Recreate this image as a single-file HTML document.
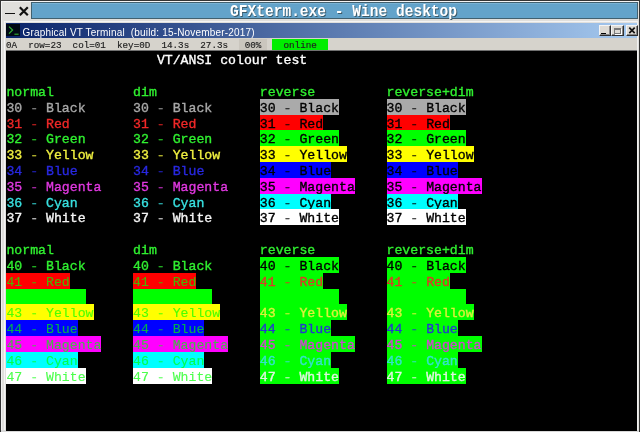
<!DOCTYPE html>
<html><head><meta charset="utf-8"><style>
*{margin:0;padding:0;box-sizing:border-box}
html,body{width:640px;height:432px;overflow:hidden;background:#e0dfdc;position:relative}
#wrap{position:absolute;left:0;top:0;width:640px;height:432px;filter:blur(0.4px)}
.a{position:absolute}
#term{position:absolute;left:6.0px;top:51.3px;width:631px;height:380px;background:#000;overflow:hidden}
.c{position:absolute;height:15.82px;-webkit-text-stroke:0.35px currentColor;font-family:"Liberation Mono",monospace;font-size:13.2px;line-height:19.37px;white-space:pre;overflow:visible}
.d{opacity:0.75}
#ttl{position:absolute;left:31px;top:2px;width:607px;height:17px;background:#63a3ca;border:1px solid #41606f;box-shadow:inset 0 1px 0 #78b2d4}
#ttxt{position:absolute;left:229.6px;top:2px;font-family:"Liberation Mono",monospace;font-weight:bold;font-size:16.6px;line-height:20px;transform:scaleX(0.877);transform-origin:0 0;color:#fff;text-shadow:1px 1px 0 #3a5a6a;white-space:pre}
#win{position:absolute;left:6px;top:23px;width:631px;height:15px;background:linear-gradient(to right,#0a246a,#a6caf0)}
#wtxt{position:absolute;left:22.5px;top:25.2px;font-family:"Liberation Sans",sans-serif;font-size:10px;letter-spacing:0.18px;line-height:15px;color:#fff;white-space:pre}
#status{position:absolute;left:6px;top:38px;width:631px;height:13px;background:#d6d3cc}
.s{position:absolute;top:0;font-family:"Liberation Mono",monospace;font-size:9.250px;line-height:16.48px;color:#202020;-webkit-text-stroke:0.15px #202020;white-space:pre}
.btn{position:absolute;background:#dedbd5;border-right:1px solid #303030;border-bottom:1px solid #303030;border-top:1px solid #f4f4f4;border-left:1px solid #f4f4f4;box-shadow:inset -1px -1px 0 #888}
</style></head><body><div id="wrap">
<!-- outer frame lines -->
<div class="a" style="left:0;top:0;width:640px;height:1px;background:#343434"></div>
<div class="a" style="left:0;top:0;width:1px;height:432px;background:#343434"></div>
<div class="a" style="left:639px;top:0;width:1px;height:432px;background:#343434"></div>
<div class="a" style="left:1px;top:1px;width:1px;height:431px;background:#f2f2f2"></div>
<div class="a" style="left:1px;top:1px;width:638px;height:1px;background:#f4f4f4"></div>
<div class="a" style="left:4px;top:21px;width:1px;height:410px;background:#f4f4f4"></div>
<div class="a" style="left:4px;top:21px;width:634px;height:1px;background:#f4f4f4"></div>
<div class="a" style="left:637px;top:21px;width:1px;height:410px;background:#f0f0f0"></div>
<div class="a" style="left:1px;top:430px;width:638px;height:2px;background:#d8d8d8"></div>
<div id="ttl"></div>
<div id="ttxt">GFXterm.exe - Wine desktop</div>
<div class="a" style="left:5px;top:13px;width:10px;height:1.4px;background:#111"></div>
<svg class="a" style="left:18px;top:6px" width="12" height="11" viewBox="0 0 12 11"><path d="M1.8 1.2L9.8 9.2M9.8 1.2L1.8 9.2" stroke="#111" stroke-width="2.2"/></svg>
<div id="win"></div>
<div class="a" style="left:6px;top:23.5px;width:14px;height:12px;background:#000814"></div>
<svg class="a" style="left:6px;top:23.5px" width="14" height="12" viewBox="0 0 14 12"><path d="M3 2.6L6.6 6L3 9.6" stroke="#34b034" stroke-width="1.2" fill="none"/><path d="M8.4 10.2H12.6" stroke="#34b034" stroke-width="1.1"/></svg>
<div id="wtxt">Graphical VT Terminal  (build: 15-November-2017)</div>
<div class="btn" style="left:599px;top:25px;width:12px;height:11px"></div>
<div class="a" style="left:601.4px;top:32.8px;width:4.8px;height:1.4px;background:#000"></div>
<div class="btn" style="left:611px;top:25px;width:13px;height:11px"></div>
<div class="a" style="left:614px;top:28px;width:7px;height:6px;border:1px solid #7a7a7a;border-top-width:2px;box-shadow:1px 1px 0 #fff"></div>
<div class="btn" style="left:626px;top:25px;width:11.5px;height:11px"></div>
<svg class="a" style="left:626px;top:25px" width="12" height="11" viewBox="0 0 12 11"><path d="M3.3 2.7L8.7 8.1M8.7 2.7L3.3 8.1" stroke="#111" stroke-width="1.7"/></svg>
<div id="status">
<div class="s" style="left:0px">0A  row=23  col=01  key=0D  14.3s  27.3s</div>
<div class="a" style="left:233.10px;top:1px;width:27.75px;height:11px;background:#cac6be"></div>
<div class="s" style="left:238.65px">00%</div>
<div class="a" style="left:266.40px;top:1px;width:55.50px;height:10.7px;background:#00ee00"></div>
<div class="s" style="left:277.50px">online</div>
</div>
<div class="a" style="left:6px;top:50.3px;width:631px;height:1px;background:#707070"></div>
<div id="term">
<div class="c" style="left:150.88px;top:0.00px;width:150.48px;color:#ffffff">VT/ANSI colour test</div>
<div class="c" style="left:0.40px;top:31.64px;width:47.52px;color:#30f030">normal</div>
<div class="c" style="left:127.12px;top:31.64px;width:23.76px;color:#30f030">dim</div>
<div class="c" style="left:253.84px;top:31.64px;width:55.44px;color:#30f030">reverse</div>
<div class="c" style="left:380.56px;top:31.64px;width:87.12px;color:#30f030">reverse+dim</div>
<div class="c" style="left:0.40px;top:189.84px;width:47.52px;color:#30f030">normal</div>
<div class="c" style="left:127.12px;top:189.84px;width:23.76px;color:#30f030">dim</div>
<div class="c" style="left:253.84px;top:189.84px;width:55.44px;color:#30f030">reverse</div>
<div class="c" style="left:380.56px;top:189.84px;width:87.12px;color:#30f030">reverse+dim</div>
<div class="c" style="left:0.40px;top:47.46px;width:79.20px;color:#a8a8a8">30 <span class="d">-</span> Black</div>
<div class="c" style="left:127.12px;top:47.46px;width:79.20px;color:#a8a8a8">30 <span class="d">-</span> Black</div>
<div class="c" style="left:253.84px;top:47.46px;width:79.20px;color:#000000;background:#aaaaaa">30 <span class="d">-</span> Black</div>
<div class="c" style="left:380.56px;top:47.46px;width:79.20px;color:#000000;background:#aaaaaa">30 <span class="d">-</span> Black</div>
<div class="c" style="left:0.40px;top:63.28px;width:63.36px;color:#f02828">31 <span class="d">-</span> Red</div>
<div class="c" style="left:127.12px;top:63.28px;width:63.36px;color:#f02828">31 <span class="d">-</span> Red</div>
<div class="c" style="left:253.84px;top:63.28px;width:63.36px;color:#000000;background:#ff0000">31 <span class="d">-</span> Red</div>
<div class="c" style="left:380.56px;top:63.28px;width:63.36px;color:#000000;background:#ff0000">31 <span class="d">-</span> Red</div>
<div class="c" style="left:0.40px;top:79.10px;width:79.20px;color:#30f030">32 <span class="d">-</span> Green</div>
<div class="c" style="left:127.12px;top:79.10px;width:79.20px;color:#30f030">32 <span class="d">-</span> Green</div>
<div class="c" style="left:253.84px;top:79.10px;width:79.20px;color:#000000;background:#00ff00">32 <span class="d">-</span> Green</div>
<div class="c" style="left:380.56px;top:79.10px;width:79.20px;color:#000000;background:#00ff00">32 <span class="d">-</span> Green</div>
<div class="c" style="left:0.40px;top:94.92px;width:87.12px;color:#f0f040">33 <span class="d">-</span> Yellow</div>
<div class="c" style="left:127.12px;top:94.92px;width:87.12px;color:#f0f040">33 <span class="d">-</span> Yellow</div>
<div class="c" style="left:253.84px;top:94.92px;width:87.12px;color:#000000;background:#ffff00">33 <span class="d">-</span> Yellow</div>
<div class="c" style="left:380.56px;top:94.92px;width:87.12px;color:#000000;background:#ffff00">33 <span class="d">-</span> Yellow</div>
<div class="c" style="left:0.40px;top:110.74px;width:71.28px;color:#2828e0">34 <span class="d">-</span> Blue</div>
<div class="c" style="left:127.12px;top:110.74px;width:71.28px;color:#2828e0">34 <span class="d">-</span> Blue</div>
<div class="c" style="left:253.84px;top:110.74px;width:71.28px;color:#000000;background:#0000ff">34 <span class="d">-</span> Blue</div>
<div class="c" style="left:380.56px;top:110.74px;width:71.28px;color:#000000;background:#0000ff">34 <span class="d">-</span> Blue</div>
<div class="c" style="left:0.40px;top:126.56px;width:95.04px;color:#e038e0">35 <span class="d">-</span> Magenta</div>
<div class="c" style="left:127.12px;top:126.56px;width:95.04px;color:#e038e0">35 <span class="d">-</span> Magenta</div>
<div class="c" style="left:253.84px;top:126.56px;width:95.04px;color:#000000;background:#ff00ff">35 <span class="d">-</span> Magenta</div>
<div class="c" style="left:380.56px;top:126.56px;width:95.04px;color:#000000;background:#ff00ff">35 <span class="d">-</span> Magenta</div>
<div class="c" style="left:0.40px;top:142.38px;width:71.28px;color:#38e0e0">36 <span class="d">-</span> Cyan</div>
<div class="c" style="left:127.12px;top:142.38px;width:71.28px;color:#38e0e0">36 <span class="d">-</span> Cyan</div>
<div class="c" style="left:253.84px;top:142.38px;width:71.28px;color:#000000;background:#00ffff">36 <span class="d">-</span> Cyan</div>
<div class="c" style="left:380.56px;top:142.38px;width:71.28px;color:#000000;background:#00ffff">36 <span class="d">-</span> Cyan</div>
<div class="c" style="left:0.40px;top:158.20px;width:79.20px;color:#f4f4f4">37 <span class="d">-</span> White</div>
<div class="c" style="left:127.12px;top:158.20px;width:79.20px;color:#f4f4f4">37 <span class="d">-</span> White</div>
<div class="c" style="left:253.84px;top:158.20px;width:79.20px;color:#000000;background:#ffffff">37 <span class="d">-</span> White</div>
<div class="c" style="left:380.56px;top:158.20px;width:79.20px;color:#000000;background:#ffffff">37 <span class="d">-</span> White</div>
<div class="c" style="left:0.40px;top:205.66px;width:79.20px;color:#30f030">40 <span class="d">-</span> Black</div>
<div class="c" style="left:127.12px;top:205.66px;width:79.20px;color:#30f030">40 <span class="d">-</span> Black</div>
<div class="c" style="left:253.84px;top:205.66px;width:79.20px;color:#000000;background:#00ff00">40 <span class="d">-</span> Black</div>
<div class="c" style="left:380.56px;top:205.66px;width:79.20px;color:#000000;background:#00ff00">40 <span class="d">-</span> Black</div>
<div class="c" style="left:0.40px;top:221.48px;width:63.36px;color:#4cb200;background:#ff0000;-webkit-text-stroke:0.1px currentColor">41 <span class="d">-</span> Red</div>
<div class="c" style="left:127.12px;top:221.48px;width:63.36px;color:#4cb200;background:#ff0000;-webkit-text-stroke:0.1px currentColor">41 <span class="d">-</span> Red</div>
<div class="c" style="left:253.84px;top:221.48px;width:63.36px;color:#dd3925;background:#00ff00">41 <span class="d">-</span> Red</div>
<div class="c" style="left:380.56px;top:221.48px;width:63.36px;color:#dd3925;background:#00ff00">41 <span class="d">-</span> Red</div>
<div class="c" style="left:0.40px;top:237.30px;width:79.20px;color:#00ff00;background:#00ff00">42 <span class="d">-</span> Green</div>
<div class="c" style="left:127.12px;top:237.30px;width:79.20px;color:#00ff00;background:#00ff00">42 <span class="d">-</span> Green</div>
<div class="c" style="left:253.84px;top:237.30px;width:79.20px;color:#00ff00;background:#00ff00">42 <span class="d">-</span> Green</div>
<div class="c" style="left:380.56px;top:237.30px;width:79.20px;color:#00ff00;background:#00ff00">42 <span class="d">-</span> Green</div>
<div class="c" style="left:0.40px;top:253.12px;width:87.12px;color:#4cff00;background:#ffff00;-webkit-text-stroke:0.1px currentColor">43 <span class="d">-</span> Yellow</div>
<div class="c" style="left:127.12px;top:253.12px;width:87.12px;color:#4cff00;background:#ffff00;-webkit-text-stroke:0.1px currentColor">43 <span class="d">-</span> Yellow</div>
<div class="c" style="left:253.84px;top:253.12px;width:87.12px;color:#ddf13b;background:#00ff00">43 <span class="d">-</span> Yellow</div>
<div class="c" style="left:380.56px;top:253.12px;width:87.12px;color:#ddf13b;background:#00ff00">43 <span class="d">-</span> Yellow</div>
<div class="c" style="left:0.40px;top:268.94px;width:71.28px;color:#00b24c;background:#0000ff;-webkit-text-stroke:0.1px currentColor">44 <span class="d">-</span> Blue</div>
<div class="c" style="left:127.12px;top:268.94px;width:71.28px;color:#00b24c;background:#0000ff;-webkit-text-stroke:0.1px currentColor">44 <span class="d">-</span> Blue</div>
<div class="c" style="left:253.84px;top:268.94px;width:71.28px;color:#2539ce;background:#00ff00">44 <span class="d">-</span> Blue</div>
<div class="c" style="left:380.56px;top:268.94px;width:71.28px;color:#2539ce;background:#00ff00">44 <span class="d">-</span> Blue</div>
<div class="c" style="left:0.40px;top:284.76px;width:95.04px;color:#4cb24c;background:#ff00ff;-webkit-text-stroke:0.1px currentColor">45 <span class="d">-</span> Magenta</div>
<div class="c" style="left:127.12px;top:284.76px;width:95.04px;color:#4cb24c;background:#ff00ff;-webkit-text-stroke:0.1px currentColor">45 <span class="d">-</span> Magenta</div>
<div class="c" style="left:253.84px;top:284.76px;width:95.04px;color:#ce48ce;background:#00ff00">45 <span class="d">-</span> Magenta</div>
<div class="c" style="left:380.56px;top:284.76px;width:95.04px;color:#ce48ce;background:#00ff00">45 <span class="d">-</span> Magenta</div>
<div class="c" style="left:0.40px;top:300.58px;width:71.28px;color:#00ff4c;background:#00ffff;-webkit-text-stroke:0.1px currentColor">46 <span class="d">-</span> Cyan</div>
<div class="c" style="left:127.12px;top:300.58px;width:71.28px;color:#00ff4c;background:#00ffff;-webkit-text-stroke:0.1px currentColor">46 <span class="d">-</span> Cyan</div>
<div class="c" style="left:253.84px;top:300.58px;width:71.28px;color:#34e2ce;background:#00ff00">46 <span class="d">-</span> Cyan</div>
<div class="c" style="left:380.56px;top:300.58px;width:71.28px;color:#34e2ce;background:#00ff00">46 <span class="d">-</span> Cyan</div>
<div class="c" style="left:0.40px;top:316.40px;width:79.20px;color:#4cff4c;background:#ffffff;-webkit-text-stroke:0.1px currentColor">47 <span class="d">-</span> White</div>
<div class="c" style="left:127.12px;top:316.40px;width:79.20px;color:#4cff4c;background:#ffffff;-webkit-text-stroke:0.1px currentColor">47 <span class="d">-</span> White</div>
<div class="c" style="left:253.84px;top:316.40px;width:79.20px;color:#e0f5e0;background:#00ff00">47 <span class="d">-</span> White</div>
<div class="c" style="left:380.56px;top:316.40px;width:79.20px;color:#e0f5e0;background:#00ff00">47 <span class="d">-</span> White</div>
</div>
</div></body></html>
